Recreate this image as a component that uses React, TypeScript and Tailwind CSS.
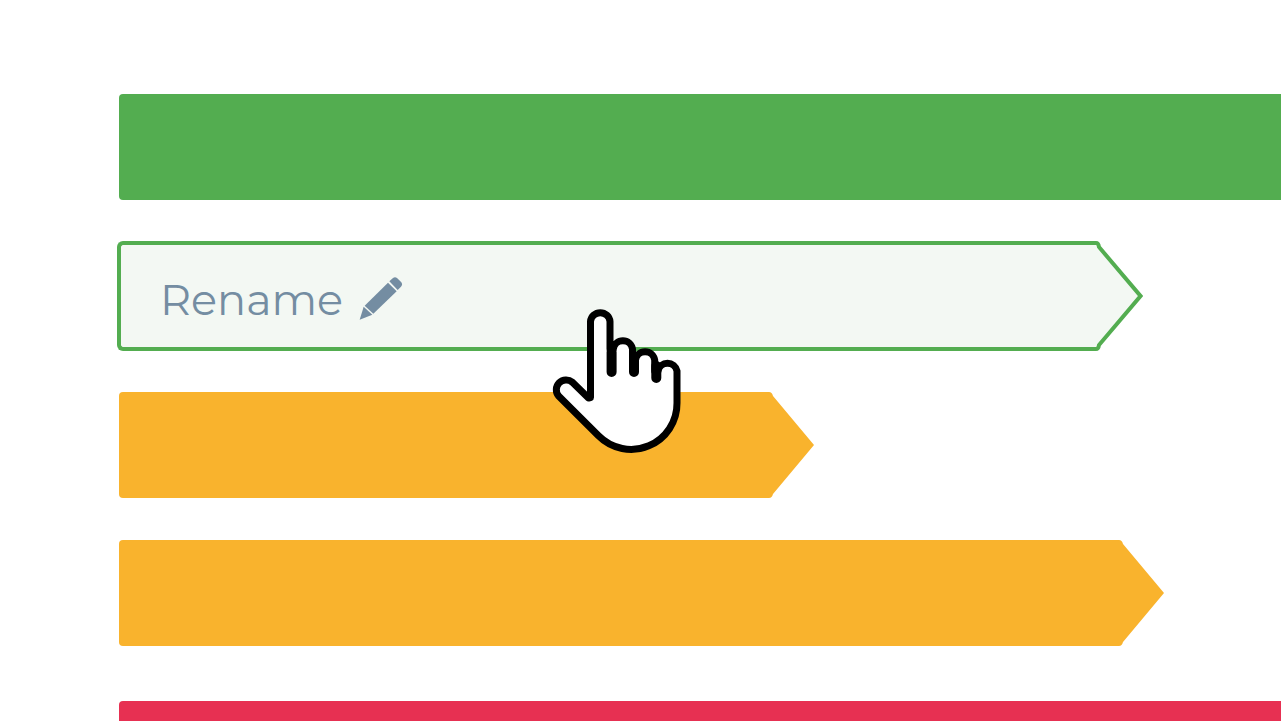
type Tone = 'green' | 'amber' | 'red'

interface BarProps {
  tone: Tone
  percent: number
}

const TONES: Record<Tone, string> = {
  green: 'text-[#53ad50]',
  amber: 'text-[#f9b32d]',
  red:   'text-[#e73052]',
}

function Bar({ tone, percent }: BarProps) {
  return (
    <div
      className={`flex h-[106px] shrink-0 ${TONES[tone]}`}
      style={{ width: `${percent}%` }}
    >
      <div className="grow rounded-l bg-current" />
      <svg viewBox="0 0 49 106" className="w-[49px] h-[106px] shrink-0" fill="currentColor" aria-hidden="true">
        <path d="M0 0H4Q7 0 8 4L49 53L8 102Q7 106 4 106H0Z" />
      </svg>
    </div>
  )
}

function PencilIcon() {
  return (
    <svg viewBox="30 24 132 132" className="size-11 shrink-0" fill="currentColor" aria-hidden="true">
      <path d="M121 40L132 30Q138 25 144 30L157 43Q162 50 156 56L146 66Z" />
      <path d="M117 44L143 70L73 137L47 113Z" />
      <path d="M44 116L70 140L32 155Z" />
    </svg>
  )
}

function HandCursor() {
  return (
    <svg
      viewBox="0 0 160 160"
      className="absolute left-[423px] top-[59px] size-40 z-10 pointer-events-none"
      fill="white"
      stroke="black"
      strokeWidth="7"
      strokeLinecap="round"
      strokeLinejoin="round"
      aria-hidden="true"
    >
      <path d="M50.5 97.5V21.5A9.8 9.8 0 0 1 70 21.5V49H73.3A9.7 9.7 0 0 1 92.5 49V60H95.5A9.7 9.7 0 0 1 114.7 60V71H118A9.7 9.7 0 0 1 137 71V103A45.9 45.9 0 0 1 58.5 135.8L18.6 96A9.8 9.8 0 0 1 32.4 82.2L48.5 98Z" />
      <path strokeWidth="10" d="M71.600 52V72M94 56V72M116.300 66V78" />
    </svg>
  )
}

function ActiveBar({ percent }: { percent: number }) {
  return (
    <div
      className="relative -ml-0.5 flex h-[110px] shrink-0 text-[#53ad50]"
      style={{ width: `${percent}%` }}
    >
      <div className="flex grow items-center rounded-l-md border-4 border-r-0 border-current bg-[#f3f8f3] pl-[39px]">
        <button
          type="button"
          className="flex items-center gap-4 pt-1 font-['Montserrat','Inter',sans-serif] text-[43px] leading-[52px] text-[#748da2] cursor-pointer"
        >
          <span className="pt-1">Rename</span>
          <PencilIcon />
        </button>
      </div>
      <svg viewBox="0 0 50 110" className="w-[50px] h-[110px] shrink-0" aria-hidden="true">
        <path
          d="M0 2H3Q5.500 2 6 6L47.500 55L6 104Q5.500 108 3 108H0"
          fill="#f3f8f3"
          stroke="currentColor"
          strokeWidth="4"
        />
      </svg>
      <HandCursor />
    </div>
  )
}

export default function App() {
  return (
    <main className="flex h-screen flex-col overflow-hidden bg-white pl-[119px] pt-[94px]">
      <div className="flex shrink-0 flex-col gap-[41px]">
        <Bar tone="green" percent={120} />
        <ActiveBar percent={88.3} />
        <div className="flex flex-col gap-[42px]">
          <Bar tone="amber" percent={59.8} />
          <Bar tone="amber" percent={89.9} />
        </div>
      </div>
      <div className="mt-[55px] shrink-0">
        <Bar tone="red" percent={120} />
      </div>
    </main>
  )
}
